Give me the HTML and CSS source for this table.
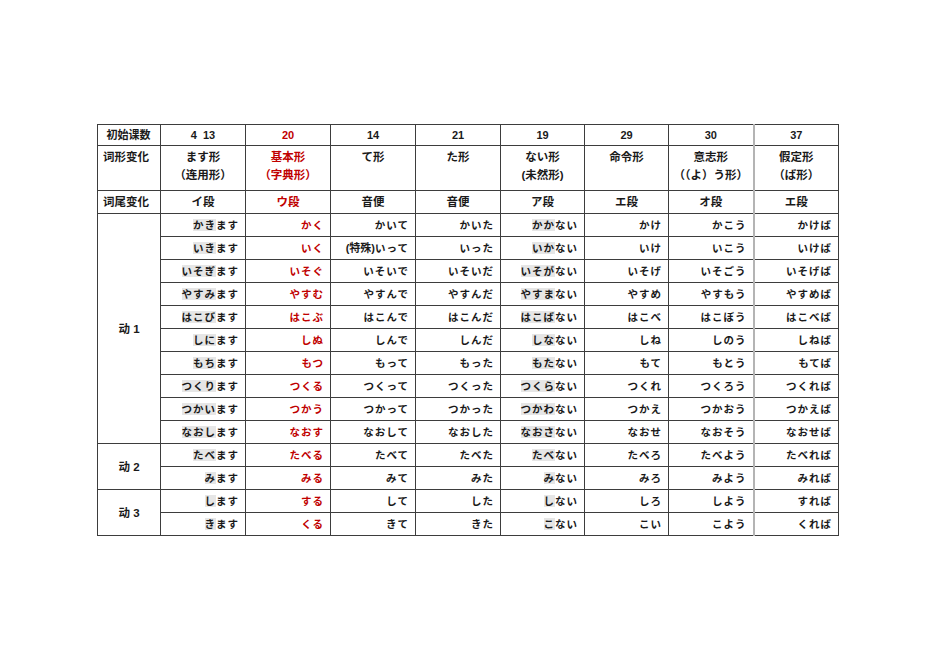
FILE: index.html
```html
<!DOCTYPE html>
<html lang="ja">
<head>
<meta charset="utf-8">
<link rel="stylesheet" href="styles.css">
</head>
<body>
<div class="page">
<table class="conj">
<colgroup>
<col class="c-first"><col class="c"><col class="c"><col class="c"><col class="c"><col class="c-n"><col class="c-n"><col class="c"><col class="c">
</colgroup>
<tr class="r-head">
<td class="lbl">初始课数</td><td class="ctr">4&nbsp;&nbsp;13</td><td class="ctr red">20</td><td class="ctr">14</td><td class="ctr">21</td><td class="ctr">19</td><td class="ctr">29</td><td class="ctr">30</td><td class="ctr last">37</td>
</tr>
<tr class="r-form">
<td class="lbl">词形变化</td><td class="ctr">ます形<br>（连用形）</td><td class="ctr red">基本形<br>（字典形）</td><td class="ctr">て形</td><td class="ctr">た形</td><td class="ctr">ない形<br>(未然形)</td><td class="ctr">命令形</td><td class="ctr">意志形<br>（（よ）う形）</td><td class="ctr last">假定形<br>（ば形）</td>
</tr>
<tr class="r-end">
<td class="lbl">词尾变化</td><td class="ctr">イ段</td><td class="ctr red">ウ段</td><td class="ctr">音便</td><td class="ctr">音便</td><td class="ctr">ア段</td><td class="ctr">エ段</td><td class="ctr">オ段</td><td class="ctr last">エ段</td>
</tr>
<tr><td class="grp" rowspan="10">动 1</td><td><span class="hl">かき</span>ます</td><td class="red">かく</td><td>かいて</td><td>かいた</td><td><span class="hl">かか</span>ない</td><td>かけ</td><td>かこう</td><td class="last">かけば</td></tr>
<tr><td><span class="hl">いき</span>ます</td><td class="red">いく</td><td><b class="lat">(特殊)</b>いって</td><td>いった</td><td><span class="hl">いか</span>ない</td><td>いけ</td><td>いこう</td><td class="last">いけば</td></tr>
<tr><td><span class="hl">いそぎ</span>ます</td><td class="red">いそぐ</td><td>いそいで</td><td>いそいだ</td><td><span class="hl">いそが</span>ない</td><td>いそげ</td><td>いそごう</td><td class="last">いそげば</td></tr>
<tr><td><span class="hl">やすみ</span>ます</td><td class="red">やすむ</td><td>やすんで</td><td>やすんだ</td><td><span class="hl">やすま</span>ない</td><td>やすめ</td><td>やすもう</td><td class="last">やすめば</td></tr>
<tr><td><span class="hl">はこび</span>ます</td><td class="red">はこぶ</td><td>はこんで</td><td>はこんだ</td><td><span class="hl">はこば</span>ない</td><td>はこべ</td><td>はこぼう</td><td class="last">はこべば</td></tr>
<tr><td><span class="hl">しに</span>ます</td><td class="red">しぬ</td><td>しんで</td><td>しんだ</td><td><span class="hl">しな</span>ない</td><td>しね</td><td>しのう</td><td class="last">しねば</td></tr>
<tr><td><span class="hl">もち</span>ます</td><td class="red">もつ</td><td>もって</td><td>もった</td><td><span class="hl">もた</span>ない</td><td>もて</td><td>もとう</td><td class="last">もてば</td></tr>
<tr><td><span class="hl">つくり</span>ます</td><td class="red">つくる</td><td>つくって</td><td>つくった</td><td><span class="hl">つくら</span>ない</td><td>つくれ</td><td>つくろう</td><td class="last">つくれば</td></tr>
<tr><td><span class="hl">つかい</span>ます</td><td class="red">つかう</td><td>つかって</td><td>つかった</td><td><span class="hl">つかわ</span>ない</td><td>つかえ</td><td>つかおう</td><td class="last">つかえば</td></tr>
<tr><td><span class="hl">なおし</span>ます</td><td class="red">なおす</td><td>なおして</td><td>なおした</td><td><span class="hl">なおさ</span>ない</td><td>なおせ</td><td>なおそう</td><td class="last">なおせば</td></tr>
<tr><td class="grp" rowspan="2">动 2</td><td><span class="hl">たべ</span>ます</td><td class="red">たべる</td><td>たべて</td><td>たべた</td><td><span class="hl">たべ</span>ない</td><td>たべろ</td><td>たべよう</td><td class="last">たべれば</td></tr>
<tr><td><span class="hl">み</span>ます</td><td class="red">みる</td><td>みて</td><td>みた</td><td><span class="hl">み</span>ない</td><td>みろ</td><td>みよう</td><td class="last">みれば</td></tr>
<tr><td class="grp" rowspan="2">动 3</td><td><span class="hl">し</span>ます</td><td class="red">する</td><td>して</td><td>した</td><td><span class="hl">し</span>ない</td><td>しろ</td><td>しよう</td><td class="last">すれば</td></tr>
<tr><td><span class="hl">き</span>ます</td><td class="red">くる</td><td>きて</td><td>きた</td><td><span class="hl">こ</span>ない</td><td>こい</td><td>こよう</td><td class="last">くれば</td></tr>
</table>
</div>
</body>
</html>
```

FILE: styles.css
```css
html, body {
  margin: 0;
  padding: 0;
  background: #ffffff;
}

.page {
  padding: 124px 0 0 97px;
}

.conj {
  border-collapse: collapse;
  table-layout: fixed;
  width: 741px;
  font-family: "Liberation Sans", "Noto Sans CJK JP", "Noto Sans CJK SC", sans-serif;
  font-size: 10.5px;
  font-weight: 700;
  color: #1a1a1a;
}

.c-first { width: 63px; }
.c { width: 85px; }
.c-n { width: 84px; }

.conj td {
  border: 1px solid #3d3d3d;
  height: 22px;
  padding: 0 6px 0 4px;
  text-align: right;
  letter-spacing: 1px;
  line-height: 14px;
  white-space: nowrap;
  overflow: hidden;
}

.conj td.last {
  border-left: 2px solid #b4b4b4;
}

.conj tr.r-head td {
  height: 20px;
  padding-top: 0;
  padding-bottom: 0;
  text-align: center;
  letter-spacing: 0;
  font-size: 11px;
}

.conj tr.r-form td {
  height: 42px;
  vertical-align: top;
  padding-top: 2px;
  padding-bottom: 0;
  line-height: 18px;
  letter-spacing: 0;
  font-size: 11.5px;
}

.conj tr.r-end td {
  height: 22px;
  letter-spacing: 0;
  font-size: 11.5px;
}

.conj td.lbl {
  text-align: left;
  padding-left: 5px;
  letter-spacing: 0;
  font-size: 11.5px;
}

.conj td.ctr {
  text-align: center;
  padding-left: 2px;
  padding-right: 2px;
}

.conj td.grp {
  text-align: center;
  letter-spacing: 0;
  padding: 0;
  font-size: 11.5px;
}

.red {
  color: #c00000;
}

.hl {
  background: #e6e6e6;
}

.lat {
  letter-spacing: 0;
  font-weight: 700;
  font-size: 11px;
}
```
